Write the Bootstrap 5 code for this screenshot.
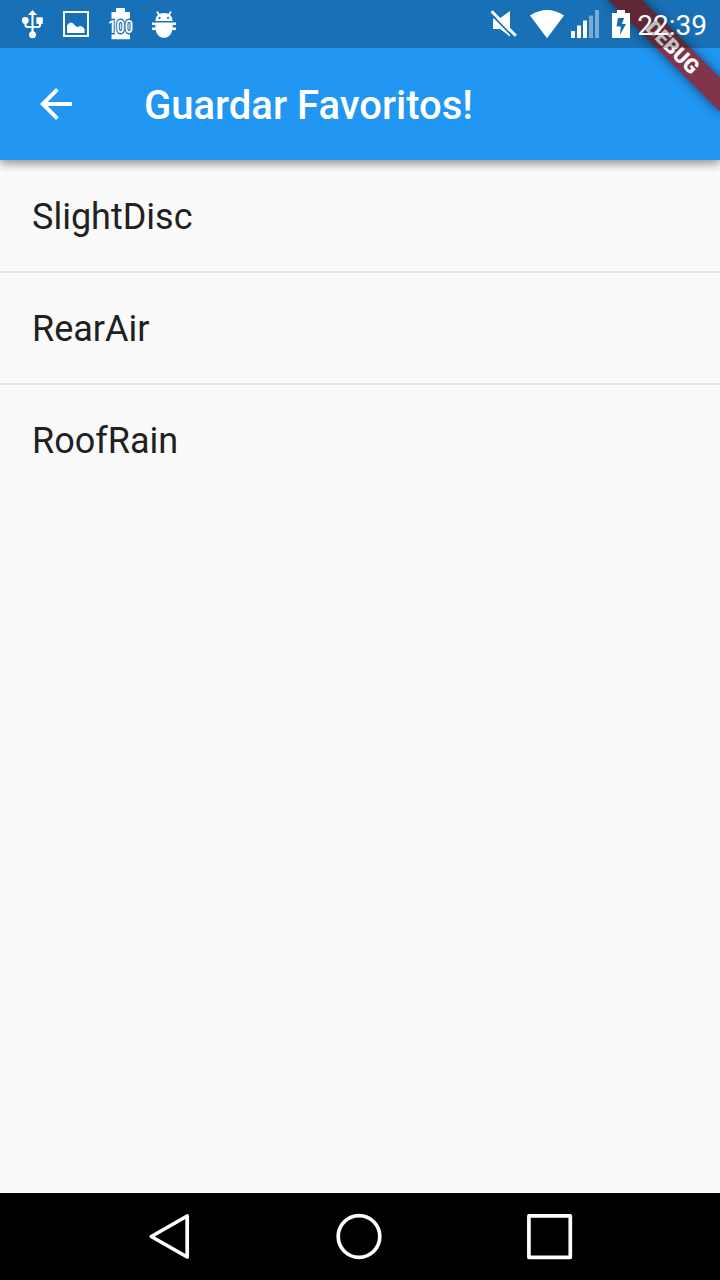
<!DOCTYPE html>
<html lang="es">
<head>
<meta charset="utf-8">
<meta name="viewport" content="width=device-width, initial-scale=1">
<title>Guardar Favoritos!</title>
<link href="https://cdn.jsdelivr.net/npm/bootstrap@5.3.0/dist/css/bootstrap.min.css" rel="stylesheet">
<style>
  body { font-family: Roboto, "Liberation Sans", sans-serif; background: #fafafa; }
  svg { display: block; flex: none; }
  .app-header { height: 160px; background: #2196f3; box-shadow: 0 4px 8px 0 rgba(0,0,0,.3), 0 3px 12px rgba(0,0,0,.14); z-index: 1; }
  .status-bar { height: 48px; background: rgba(0,0,0,.25); z-index: 3; }
  .clock { font-size: 28px; line-height: 48px; padding-left: 6px; padding-top: 2px; padding-right: 13px; }
  .toolbar-row { height: 112px; padding-left: 32px; }
  .title-text { font-size: 40px; font-weight: 500; line-height: 48px; margin-left: 64px; padding-top: 3px; }
  .debug-clip { width: 150px; height: 150px; z-index: 2; }
  .debug-ribbon { left: 70px; top: 55px; width: 160px; height: 24px; transform-origin: 50% -55px; transform: rotate(45deg); background: #81354a; box-shadow: 0 0 12px rgba(0,0,0,.5); font-size: 20.4px; line-height: 24px; font-weight: 900; }
  .fav-item { height: 112px; padding: 2px 32px 0; font-size: 36px; color: #212121; background: transparent; border: 0; }
  .fav-item + .fav-item { box-shadow: inset 0 1px #e8e8e8, 0 -1px #e8e8e8; border: 0; }
  .nav-keys { height: 87px; background: #000; }
</style>
</head>
<body>
<div class="d-flex flex-column vh-100 overflow-hidden">
  <header class="app-header position-relative text-white flex-shrink-0">
    <div class="status-bar position-relative d-flex justify-content-between">
      <div class="d-flex">
        <svg width="54" height="48" fill="#fff" stroke="#fff">
          <path d="M32.5 34V14M25.500 22v3q0 2 2 2H38q2 0 2-2V21" fill="none" stroke-width="2.100"/>
          <path d="M28 15 32.500 10l4.500 5z" stroke="none"/>
          <circle cx="25.300" cy="20.500" r="3.400" stroke="none"/>
          <path d="M36.300 17.300h6.500v6.500h-6.500z" stroke="none"/>
          <circle cx="32.500" cy="34.700" r="3.500" stroke="none"/>
        </svg>
        <svg width="46" height="48" viewBox="54 0 46 48">
          <path d="M64 12h24v24H64z" fill="none" stroke="#fff" stroke-width="2"/>
          <path d="M67 33v-7.500q4-6 8 0l2.500 1.700q4-3.200 7 1.800V33z" fill="#fff"/>
        </svg>
        <svg width="42" height="48" viewBox="100 0 42 48" fill="#fff">
          <path d="M116 8h9v4h5v27.300h-18.500V12h4.500z"/>
          <text x="120.500" y="33.300" text-anchor="middle" font-size="18.500" font-weight="500" textLength="25" lengthAdjust="spacingAndGlyphs" stroke="#1971b6" stroke-width="2.800" paint-order="stroke">100</text>
        </svg>
        <svg width="46" height="48" viewBox="142 0 46 48" fill="#fff">
          <path d="m157 11.500 2.500 4m11.500-4-2.500 4" stroke="#fff" stroke-width="1.700"/>
          <path fill-rule="evenodd" d="M155.500 21c0-5 3-8 8.500-8s8.500 3 8.500 8zM159.500 16.800a1 1 0 1 0 .1 2.100 1 1 0 0 0-.1-2.100M168 16.800a1 1 0 1 0 .1 2.100 1 1 0 0 0-.1-2.100"/>
          <path d="M152 22.500h24v2.400h-3.300v2.700h3.300V30h-3.700c-1 4.800-4 7.800-8.300 7.800s-7.300-3-8.300-7.800H152v-2.400h3.300v-2.700H152z"/>
        </svg>
      </div>
      <div class="d-flex">
        <svg width="156" height="48" viewBox="475 0 156 48" fill="#fff">
          <path d="M493 18.500h6.500l10.500-7.500V36.500l-10-7.500h-7z"/>
          <path d="m489.800 12.900 24 24.500" stroke="#1971b6" stroke-width="1.800"/>
          <path d="m491.600 11.200 24.200 24.500" stroke="#fff" stroke-width="3"/>
          <path d="M530 15.500q17-11 34 0L547 38.300z"/>
          <path d="M571 31h4v7h-4zM577 25.500h4V38h-4zM583 20.500h4V38h-4z"/>
          <path d="M589 15.500h4V38h-4zM595 10h4v28h-4z" opacity=".42"/>
          <path fill-rule="evenodd" d="M617 10h8v3h5v25h-18V13h5zM618 18l-1.500 8.500h4.300l-.8 8.500 6-11h-4l2-6z"/>
        </svg>
        <div class="clock">22:39</div>
      </div>
    </div>
    <div class="toolbar-row d-flex align-items-center">
      <svg width="48" height="48" viewBox="0 0 24 24" fill="#fff"><path d="M20 11H7.830l5.590-5.590L12 4l-8 8 8 8 1.410-1.410L7.830 13H20v-2z"/></svg>
      <h1 class="title-text mb-0">Guardar Favoritos!</h1>
    </div>
    <div class="debug-clip position-absolute top-0 end-0 overflow-hidden">
      <div class="debug-ribbon position-absolute text-center">DEBUG</div>
    </div>
  </header>
  <main class="flex-grow-1">
    <div class="list-group list-group-flush">
      <div class="fav-item list-group-item d-flex align-items-center">SlightDisc</div>
      <div class="fav-item list-group-item d-flex align-items-center">RearAir</div>
      <div class="fav-item list-group-item d-flex align-items-center">RoofRain</div>
    </div>
  </main>
  <nav class="nav-keys flex-shrink-0 d-flex justify-content-center" aria-label="Sistema">
    <svg width="720" height="87" viewBox="0 1193 720 87" fill="none" stroke="#fff" stroke-width="3.700" stroke-linejoin="round">
      <path d="m151.300 1236.500 35.900-20.500v41z"/>
      <circle cx="359" cy="1236.500" r="20.800"/>
      <path d="M528.900 1215.900h41.400v41.400h-41.400z"/>
    </svg>
  </nav>
</div>
<script src="https://cdn.jsdelivr.net/npm/bootstrap@5.3.0/dist/js/bootstrap.bundle.min.js"></script>
</body>
</html>
